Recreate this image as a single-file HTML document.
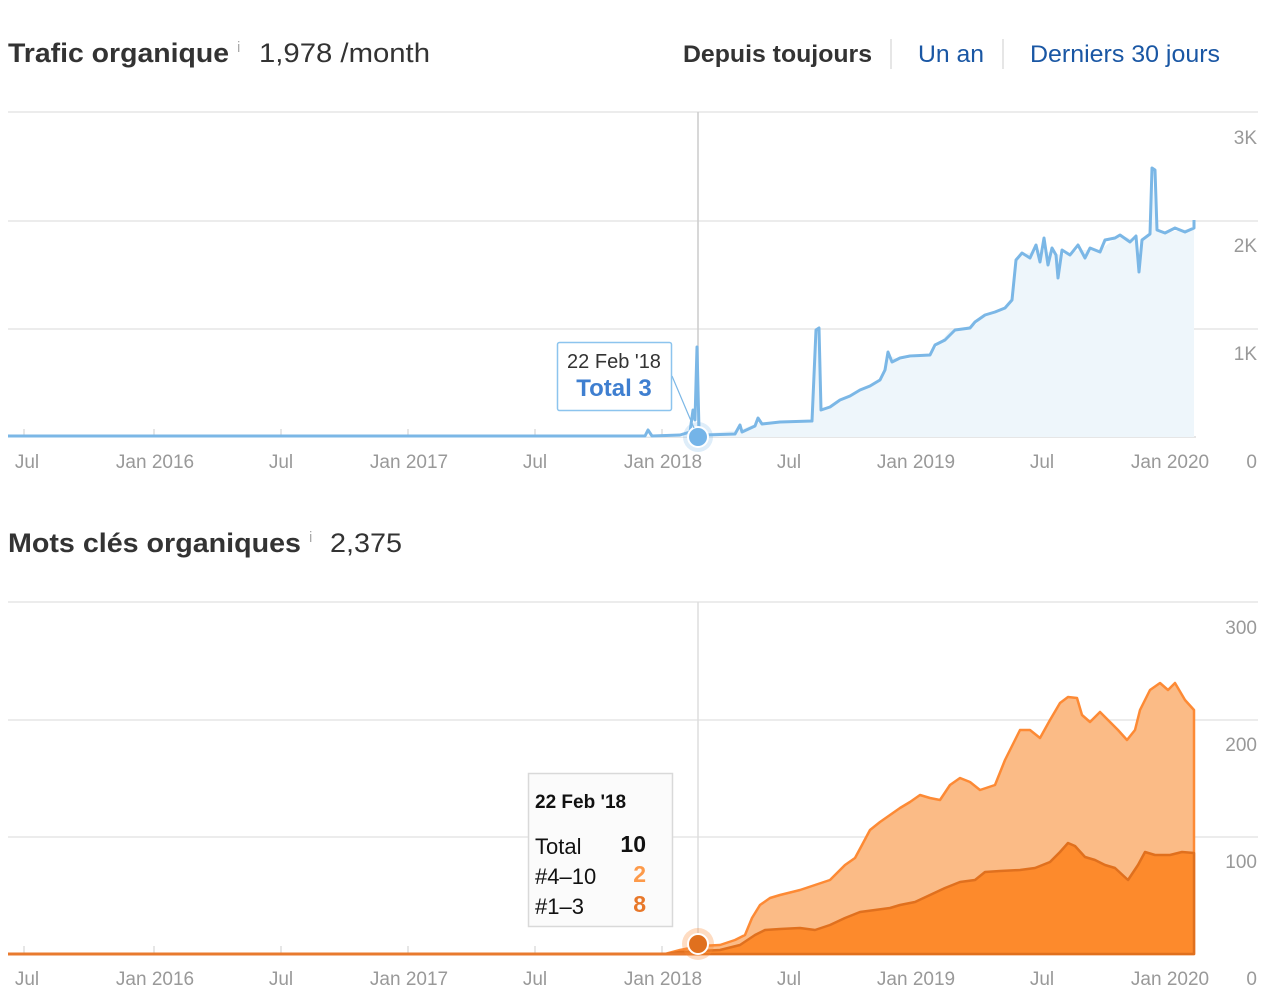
<!DOCTYPE html>
<html><head><meta charset="utf-8"><style>
html,body{margin:0;padding:0;background:#fff;width:1274px;height:1004px;overflow:hidden}
svg{display:block}
text{font-family:"Liberation Sans",Arial,sans-serif}
</style></head><body>
<svg width="1274" height="1004" viewBox="0 0 1274 1004">
<!-- Header 1 -->
<text x="8" y="62" font-size="27" font-weight="bold" fill="#333" textLength="221" lengthAdjust="spacingAndGlyphs">Trafic organique</text>
<text x="237" y="52" font-size="15" fill="#aaa">i</text>
<text x="259" y="62" font-size="27" fill="#333" textLength="171" lengthAdjust="spacingAndGlyphs">1,978 /month</text>
<text x="683" y="62" font-size="24" font-weight="bold" fill="#333" textLength="189" lengthAdjust="spacingAndGlyphs">Depuis toujours</text>
<line x1="891" y1="39" x2="891" y2="69" stroke="#ddd" stroke-width="1.5"/>
<text x="918" y="62" font-size="24" fill="#1a57a4" textLength="66" lengthAdjust="spacingAndGlyphs">Un an</text>
<line x1="1003" y1="39" x2="1003" y2="69" stroke="#ddd" stroke-width="1.5"/>
<text x="1030" y="62" font-size="24" fill="#1a57a4" textLength="190" lengthAdjust="spacingAndGlyphs">Derniers 30 jours</text>

<!-- Chart 1 grid -->
<g stroke="#e6e6e6" stroke-width="1.5">
<line x1="8" y1="112" x2="1258" y2="112"/>
<line x1="8" y1="221" x2="1258" y2="221"/>
<line x1="8" y1="329" x2="1258" y2="329"/>
</g>
<line x1="8" y1="437" x2="1196" y2="437" stroke="#ccc" stroke-width="1"/>
<g stroke="#ddd" stroke-width="1.5">
<line x1="24" y1="429" x2="24" y2="437"/><line x1="154" y1="429" x2="154" y2="437"/><line x1="281" y1="429" x2="281" y2="437"/><line x1="408" y1="429" x2="408" y2="437"/><line x1="535" y1="429" x2="535" y2="437"/><line x1="662" y1="429" x2="662" y2="437"/><line x1="789" y1="429" x2="789" y2="437"/><line x1="916" y1="429" x2="916" y2="437"/><line x1="1042" y1="429" x2="1042" y2="437"/><line x1="1169" y1="429" x2="1169" y2="437"/>
</g>
<g font-size="19" fill="#999" text-anchor="end">
<text x="1257" y="144">3K</text><text x="1257" y="252">2K</text><text x="1257" y="360">1K</text><text x="1257" y="468">0</text>
</g>
<g font-size="19" fill="#999" text-anchor="middle">
<text x="27" y="468">Jul</text><text x="155" y="468">Jan 2016</text><text x="281" y="468">Jul</text><text x="409" y="468">Jan 2017</text><text x="535" y="468">Jul</text><text x="663" y="468">Jan 2018</text><text x="789" y="468">Jul</text><text x="916" y="468">Jan 2019</text><text x="1042" y="468">Jul</text><text x="1170" y="468">Jan 2020</text>
</g>
<path d="M8,436 L680,436 L740,430 L760,422 L812,421 L818,328 L822,410 L840,402 L860,390 L880,380 L888,355 L900,360 L930,355 L950,330 L975,325 L985,315 L1010,305 L1016,260 L1020,255 L1040,250 L1060,255 L1080,250 L1100,250 L1120,235 L1135,240 L1140,270 L1143,240 L1150,235 L1152,167 L1156,230 L1170,232 L1194,228 L1194,220 L1194,437 L8,437 Z" fill="#eef6fb"/>
<line x1="698" y1="112" x2="698" y2="437" stroke="#ccc" stroke-width="1.5"/>
<path d="M8,436 L645,436 L648,430 L652,436 L680,435 L690,432 L693,410 L695,420 L697,347 L699,430 L705,435 L735,434 L740,425 L742,432 L755,426 L758,418 L762,424 L780,422 L812,421 L816,330 L819,328 L821,410 L830,407 L840,400 L850,396 L860,390 L870,386 L880,380 L885,370 L888,352 L892,362 L900,358 L910,356 L930,355 L935,345 L945,340 L955,330 L970,328 L975,322 L985,315 L995,312 L1005,308 L1012,300 L1016,260 L1022,253 L1030,258 L1036,245 L1040,262 L1044,238 L1048,265 L1052,248 L1056,255 L1058,278 L1062,250 L1070,255 L1078,245 L1085,258 L1090,248 L1100,252 L1105,240 L1115,238 L1120,235 L1130,242 L1136,236 L1139,272 L1142,240 L1150,234 L1152,168 L1155,170 L1157,230 L1165,233 L1175,228 L1185,232 L1194,228 L1194,220" fill="none" stroke="#7bb7e6" stroke-width="3" stroke-linejoin="round"/>
<circle cx="698" cy="437" r="15" fill="#7bb7e6" opacity="0.25"/>
<circle cx="698" cy="437" r="10" fill="#74b4e8" stroke="#fff" stroke-width="2"/>
<line x1="672" y1="376" x2="694" y2="428" stroke="#7bb7e6" stroke-width="1.2"/>
<rect x="557.5" y="342.5" width="114" height="68" rx="2" fill="#fff" stroke="#8cc4ee" stroke-width="1.5"/>
<text x="614" y="368" font-size="20" fill="#333" text-anchor="middle">22 Feb '18</text>
<text x="614" y="396" font-size="24" font-weight="bold" fill="#3f7fd0" text-anchor="middle">Total 3</text>

<!-- Header 2 -->
<text x="8" y="552" font-size="27" font-weight="bold" fill="#333" textLength="293" lengthAdjust="spacingAndGlyphs">Mots clés organiques</text>
<text x="309" y="542" font-size="15" fill="#aaa">i</text>
<text x="330" y="552" font-size="27" fill="#333" textLength="72" lengthAdjust="spacingAndGlyphs">2,375</text>

<!-- Chart 2 grid -->
<g stroke="#e6e6e6" stroke-width="1.5">
<line x1="8" y1="602" x2="1258" y2="602"/>
<line x1="8" y1="720" x2="1258" y2="720"/>
<line x1="8" y1="837" x2="1258" y2="837"/>
</g>
<g stroke="#ddd" stroke-width="1.5">
<line x1="24" y1="946" x2="24" y2="954"/><line x1="154" y1="946" x2="154" y2="954"/><line x1="281" y1="946" x2="281" y2="954"/><line x1="408" y1="946" x2="408" y2="954"/><line x1="535" y1="946" x2="535" y2="954"/><line x1="662" y1="946" x2="662" y2="954"/>
</g>
<g font-size="19" fill="#999" text-anchor="end">
<text x="1257" y="634">300</text><text x="1257" y="751">200</text><text x="1257" y="868">100</text><text x="1257" y="985">0</text>
</g>
<g font-size="19" fill="#999" text-anchor="middle">
<text x="27" y="985">Jul</text><text x="155" y="985">Jan 2016</text><text x="281" y="985">Jul</text><text x="409" y="985">Jan 2017</text><text x="535" y="985">Jul</text><text x="663" y="985">Jan 2018</text><text x="789" y="985">Jul</text><text x="916" y="985">Jan 2019</text><text x="1042" y="985">Jul</text><text x="1170" y="985">Jan 2020</text>
</g>
<path d="M665,954 L680,950 L700,946 L720,945 L735,940 L745,935 L752,918 L760,905 L770,898 L780,895 L800,890 L815,885 L830,880 L845,865 L855,858 L862,845 L870,830 L880,822 L890,815 L900,808 L910,802 L920,795 L930,798 L940,800 L950,785 L960,778 L970,782 L980,790 L995,785 L1005,760 L1015,740 L1020,730 L1030,730 L1040,738 L1050,720 L1060,703 L1068,697 L1077,698 L1082,715 L1090,722 L1100,712 L1110,722 L1118,730 L1127,740 L1135,730 L1140,710 L1150,690 L1160,683 L1168,690 L1175,683 L1185,700 L1194,710 L1194,954 Z" fill="#fbbb86" stroke="#fd8a35" stroke-width="2.5" stroke-linejoin="round"/>
<path d="M665,954 L680,952 L720,950 L740,945 L755,935 L765,930 L780,929 L800,928 L815,930 L830,925 L845,918 L860,912 L875,910 L890,908 L900,905 L915,902 L930,895 L945,888 L960,882 L975,880 L985,872 L1000,871 L1020,870 L1035,868 L1050,862 L1060,852 L1068,843 L1075,846 L1085,857 L1095,860 L1105,865 L1115,868 L1128,880 L1138,865 L1145,852 L1155,855 L1170,855 L1182,852 L1194,853 L1194,954 Z" fill="#fd8a2c" stroke="#e0701e" stroke-width="2.5" stroke-linejoin="round"/>
<line x1="8" y1="954" x2="700" y2="954" stroke="#e87a2e" stroke-width="3"/>
<line x1="698" y1="602" x2="698" y2="954" stroke="#ddd" stroke-width="1.5"/>
<circle cx="698" cy="944" r="16" fill="#fd8a35" opacity="0.3"/>
<circle cx="698" cy="944" r="10" fill="#e0701e" stroke="#fff" stroke-width="2"/>
<rect x="528.5" y="773.5" width="144" height="153" fill="#fbfbfb" stroke="#d9d9d9" stroke-width="1.5"/>
<text x="535" y="808" font-size="19" font-weight="bold" fill="#111">22 Feb '18</text>
<text x="535" y="854" font-size="22" fill="#111">Total</text>
<text x="646" y="852" font-size="23" font-weight="bold" fill="#111" text-anchor="end">10</text>
<text x="535" y="884" font-size="22" fill="#111">#4–10</text>
<text x="646" y="882" font-size="23" font-weight="bold" fill="#fd9a4a" text-anchor="end">2</text>
<text x="535" y="914" font-size="22" fill="#111">#1–3</text>
<text x="646" y="912" font-size="23" font-weight="bold" fill="#e8782a" text-anchor="end">8</text>
</svg>
</body></html>
